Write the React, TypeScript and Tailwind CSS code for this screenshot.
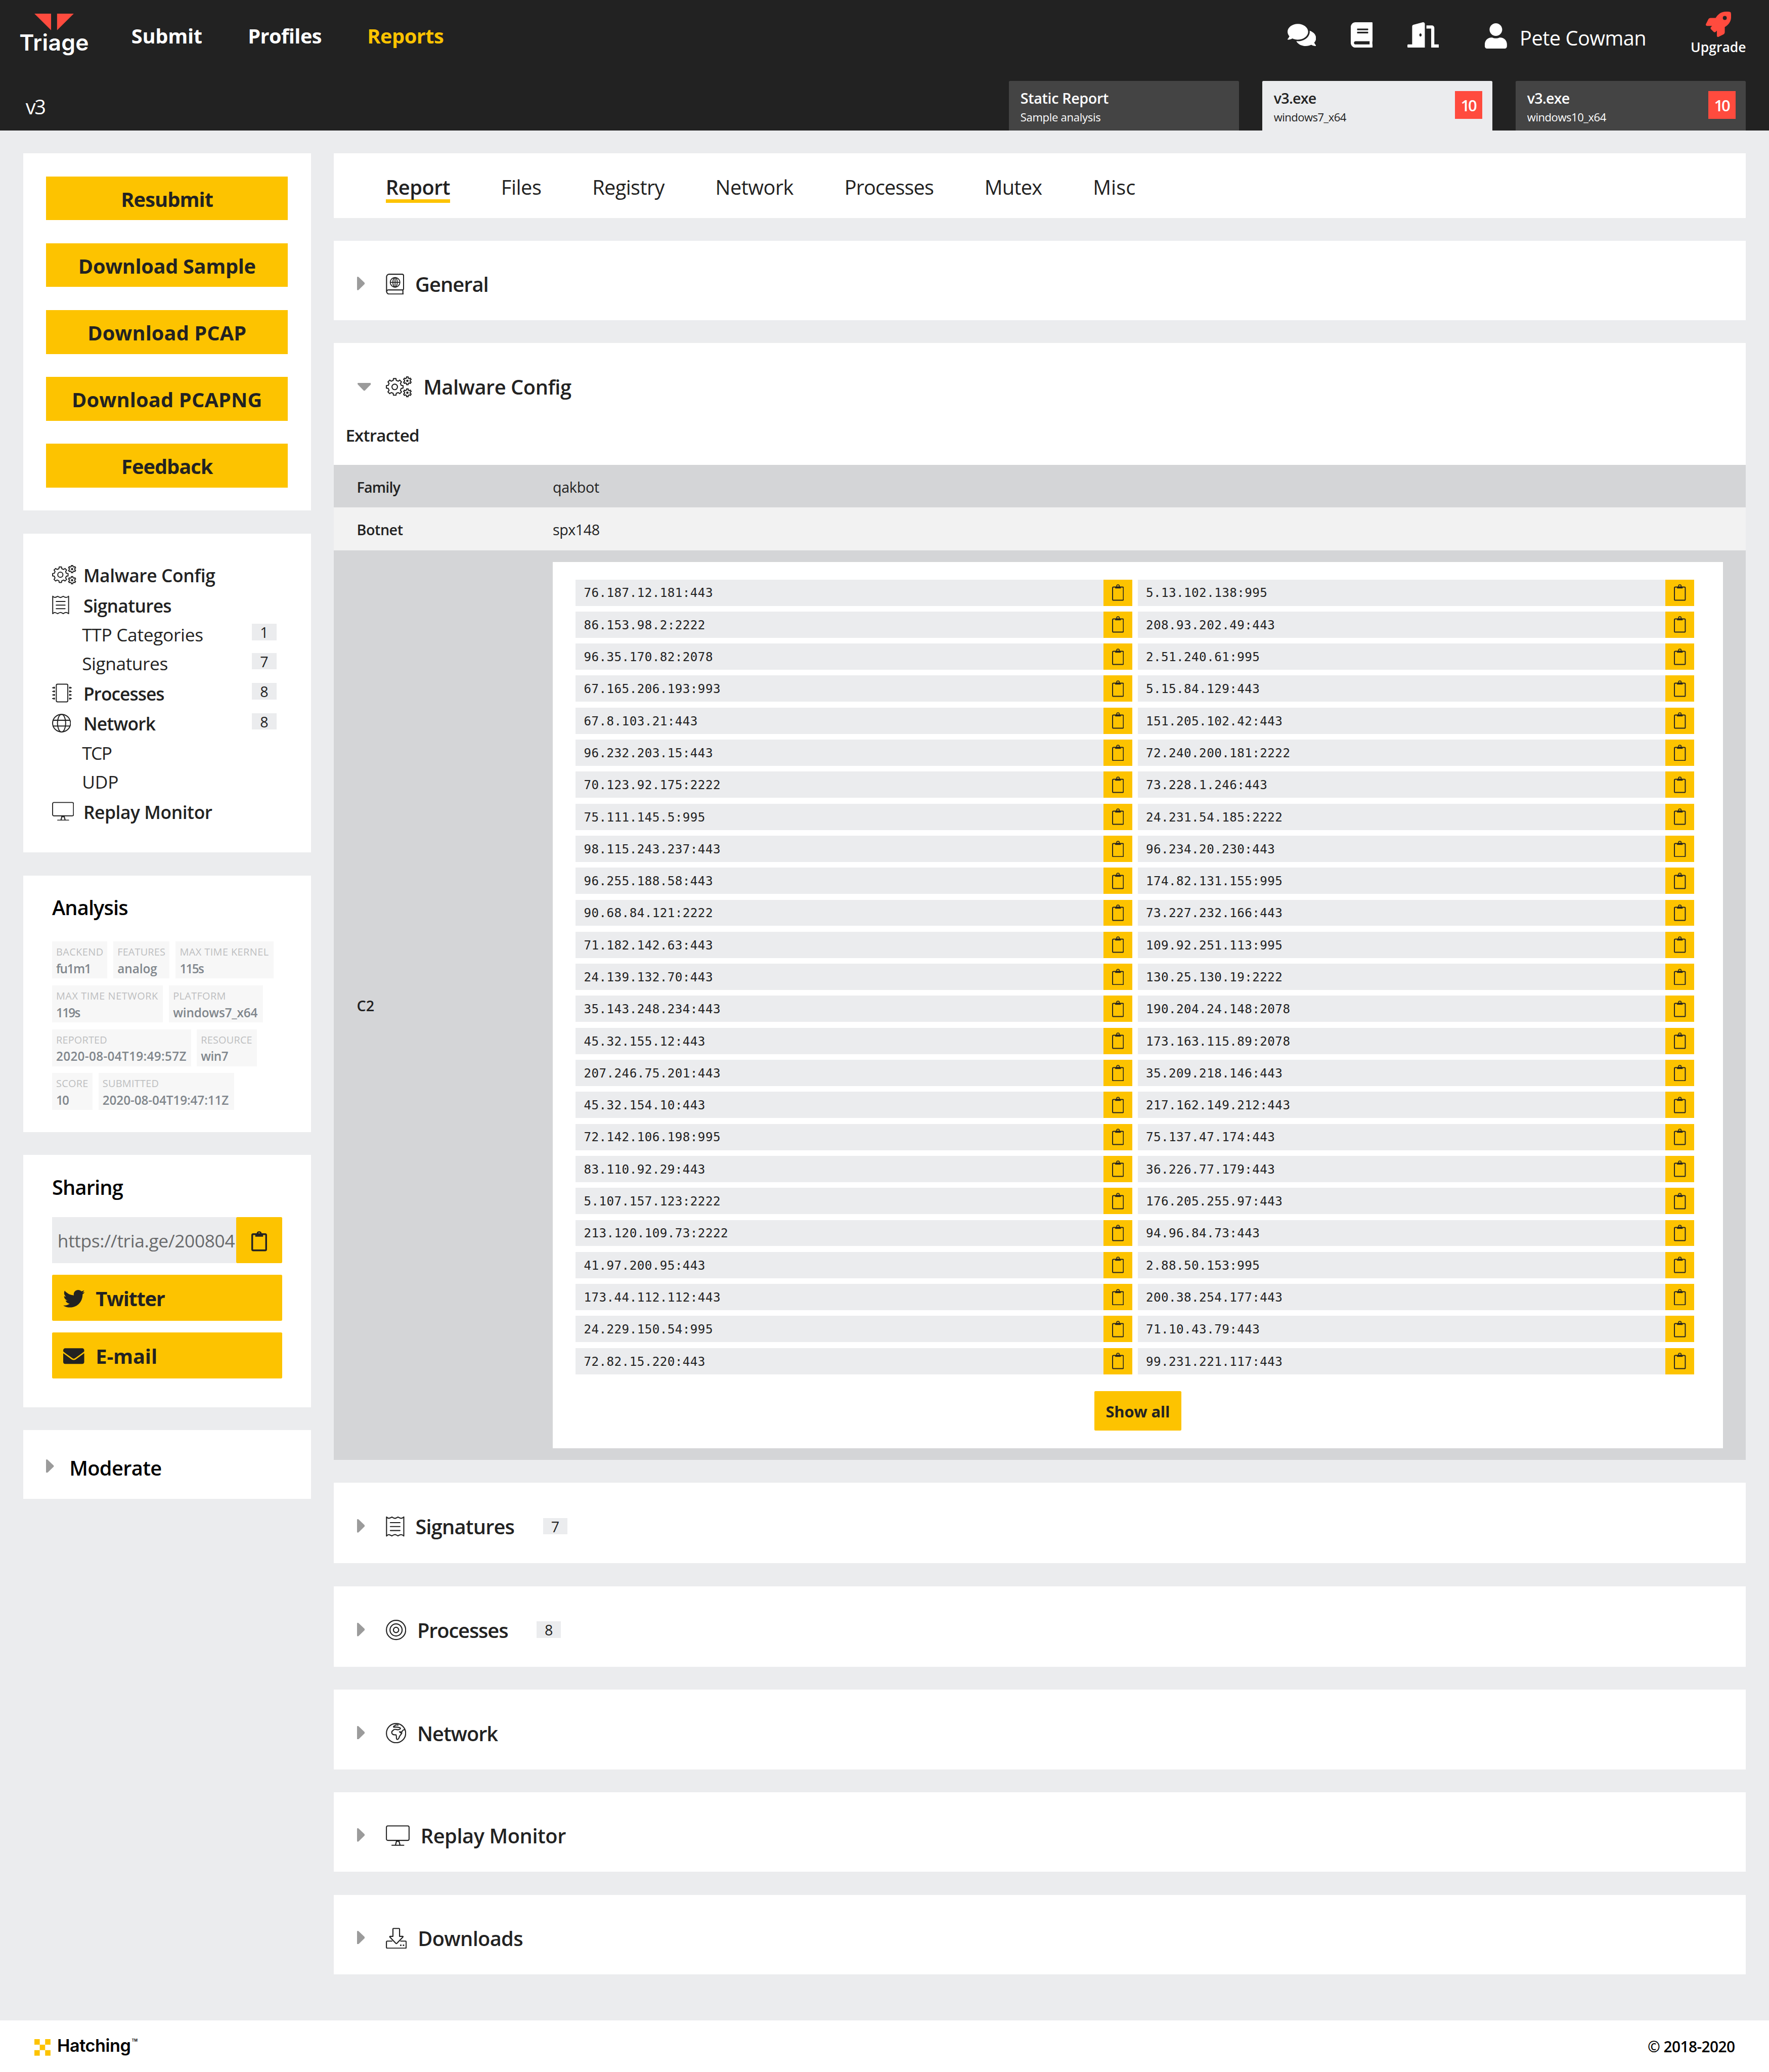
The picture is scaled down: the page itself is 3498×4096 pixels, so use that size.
import type { ReactNode } from "react";
import { FaBook, FaComments, FaDoorOpen, FaEnvelope, FaRocket, FaTwitter, FaUser } from "react-icons/fa";

/* ---------- icons ---------- */

function gearPath(cx: number, cy: number, outer: number, inner: number, teeth: number) {
  const step = (Math.PI * 2) / teeth;
  const pts: string[] = [];
  for (let i = 0; i < teeth; i++) {
    const a = -Math.PI / 2 + i * step;
    const corners: [number, number][] = [
      [-0.3, inner],
      [-0.19, outer],
      [0.19, outer],
      [0.3, inner],
    ];
    for (const [f, r] of corners) {
      pts.push(`${(cx + Math.cos(a + f * step) * r).toFixed(2)} ${(cy + Math.sin(a + f * step) * r).toFixed(2)}`);
    }
  }
  return `M${pts.join("L")}Z`;
}

const BIG_GEAR = gearPath(40, 46, 38, 30, 8);
const TOP_GEAR = gearPath(97, 18.5, 18, 13, 6);
const BOTTOM_GEAR = gearPath(97, 72.5, 18, 13, 6);

type IconProps = { className?: string };

function GearsIcon({ className }: IconProps) {
  return (
    <svg viewBox="0 0 118 91" className={className} fill="none" stroke="currentColor" strokeWidth="4.8" strokeLinejoin="round">
      <path d={BIG_GEAR} />
      <circle cx="40" cy="46" r="12.5" />
      <path d={TOP_GEAR} />
      <path d={BOTTOM_GEAR} />
      <circle cx="97" cy="18.5" r="3" fill="currentColor" />
      <circle cx="97" cy="72.5" r="3" fill="currentColor" />
    </svg>
  );
}

function ReceiptIcon({ className }: IconProps) {
  return (
    <svg viewBox="0 0 83 92" className={className} fill="none" stroke="currentColor" strokeWidth="4.8" strokeLinejoin="round" strokeLinecap="round">
      <path d="M3 3.5Q9 10 14 9.5Q20 8 27 4Q34 9 41 10Q48 8 54 4Q61 9 67 9.5Q73 10 80 3.5V88.500Q73 82 67 82.500Q61 83 54 88Q48 84 41 82Q34 83 27 88Q20 84 14 82.500Q9 82 3 88.500Z" />
      <path d="M20 29H63M20 46.500H63M20 64H63" />
    </svg>
  );
}

function ChipIcon({ className }: IconProps) {
  return (
    <svg viewBox="0 0 96 92" className={className} fill="none" stroke="currentColor" strokeWidth="4.8">
      <rect x="20.500" y="3" width="56" height="86" rx="6" />
      <path strokeWidth="8.500" d="M6 20.500H14M6 38H14M6 55.500H14M6 73H14M83 20.500H91M83 38H91M83 55.500H91M83 73H91" />
      <path strokeWidth="4" d="M0 20.500H8M0 38H8M0 55.500H8M0 73H8M88 20.500H96M88 38H96M88 55.500H96M88 73H96" />
    </svg>
  );
}

function GlobeIcon({ className }: IconProps) {
  return (
    <svg viewBox="0 0 92 90" className={className} fill="none" stroke="currentColor" strokeWidth="5">
      <ellipse cx="46" cy="45" rx="43.500" ry="42.500" />
      <ellipse cx="46" cy="45" rx="20" ry="42.500" />
      <path d="M4 31H88M4 59H88" />
    </svg>
  );
}

function MonitorIcon({ className }: IconProps) {
  return (
    <svg viewBox="0 0 106 92" className={className} fill="none" stroke="currentColor" strokeWidth="4.6" strokeLinejoin="round" strokeLinecap="round">
      <rect x="2.500" y="3" width="101" height="64.500" rx="6" />
      <path d="M27 89H80" />
      <path d="M48 69L43 88M58 69L63 88" strokeWidth="5" />
      <path d="M48 71H58" strokeWidth="6" />
    </svg>
  );
}

function PassportIcon({ className }: IconProps) {
  return (
    <svg viewBox="0 0 16 18.2" className={className} fill="none" stroke="currentColor" strokeWidth="0.95" strokeLinejoin="round">
      <path d="M15.400 17.700H2.900A2.300 2.300 0 0 1 .6 15.400V2.700A2.200 2.200 0 0 1 2.800.5H14.200A1.200 1.200 0 0 1 15.400 1.700V13A1.100 1.100 0 0 1 14.300 14.100H2.900A1.800 1.800 0 0 0 .6 15.700M14.800 14.200V17.600" />
      <g strokeWidth="0.8">
        <circle cx="8" cy="7.500" r="4.200" />
        <ellipse cx="8" cy="7.500" rx="1.900" ry="4.200" />
        <path d="M3.800 7.500H12.200M8 3.300V11.700" />
      </g>
    </svg>
  );
}

function TargetIcon({ className }: IconProps) {
  return (
    <svg viewBox="0 0 17.700 17.700" className={className} fill="none" stroke="currentColor" strokeWidth="0.95">
      <circle cx="8.850" cy="8.850" r="8.350" />
      <circle cx="8.850" cy="8.850" r="5.250" />
      <circle cx="8.850" cy="8.850" r="2.300" />
    </svg>
  );
}

function EarthIcon({ className }: IconProps) {
  return (
    <svg viewBox="0 0 17.700 17.700" className={className} fill="none" stroke="currentColor" strokeWidth="0.95" strokeLinejoin="round" strokeLinecap="round">
      <circle cx="8.850" cy="8.850" r="8.350" />
      <path d="M10.600 1.800Q8.200 1.400 8 2.300Q6.300 2.700 6.800 3.700Q9.400 3.300 12.300 4.200Q13.200 5.200 11.800 5.500Q10.800 6.200 9.200 5.700Q6.800 5.300 6.300 6.500Q4.800 7.300 5.200 8.800Q5.800 10.500 8.800 10.300Q9.300 11.500 9.200 13.300Q9.300 14.600 10.500 14.200Q11.700 13 11.800 11.700L13.800 9L11.800 7.700L14 7.800Q14.200 6.200 16.100 5.800" />
    </svg>
  );
}

function DownloadIcon({ className }: IconProps) {
  return (
    <svg viewBox="0 0 18.400 18.300" className={className} fill="none" stroke="currentColor" strokeWidth="0.95" strokeLinejoin="round" strokeLinecap="round">
      <path d="M6.700.5H11.500Q12 .5 12 1V7.400H14.800Q15.300 7.500 14.900 8L9.700 13.500Q9.200 14 8.700 13.500L3.500 8Q3.200 7.500 3.700 7.400H6.200V1Q6.200.5 6.700.5Z" />
      <path d="M5.300 11.600H1.300Q.5 11.600.5 12.400V17Q.5 17.800 1.300 17.800H17Q17.800 17.800 17.800 17V12.400Q17.800 11.600 17 11.600H13" />
      <path d="M13 15.200H13.150M15.400 15.200H15.550" strokeWidth="1.300" />
    </svg>
  );
}

function ClipboardIcon() {
  return (
    <svg viewBox="0 0 13.600 17.800" className="h-[1.1125rem] w-[0.85rem]" fill="none">
      <rect x="0.750" y="2.950" width="12.100" height="14.050" rx="0.900" stroke="currentColor" strokeWidth="1.500" />
      <path fillRule="evenodd" fill="currentColor" d="M3.400 2.200H4.600A2.250 2.250 0 0 1 9 2.200H10.200V5.200H3.400ZM6.800 1.500A.75.75 0 1 0 6.800 3A.75.75 0 1 0 6.800 1.500Z" />
    </svg>
  );
}

function ClipboardThinIcon() {
  return (
    <svg viewBox="0 0 10.300 14.400" className="h-[0.9rem] w-[0.64375rem]" fill="none" stroke="currentColor">
      <rect x="0.450" y="2.450" width="9.400" height="11.400" rx="0.700" strokeWidth="0.850" />
      <path d="M2.700 2.100H7.600V3.600H2.700Z" fill="currentColor" stroke="none" />
      <circle cx="5.150" cy="1.600" r="1.150" strokeWidth="0.700" />
    </svg>
  );
}

function CaretRight() {
  return (
    <svg viewBox="0 0 6.800 11.700" className="h-[0.73125rem] w-[0.425rem] shrink-0 text-[#9b9b9b]">
      <path fill="currentColor" d="M0 .5Q0 0 .6 0L1.300.2L6.600 5.300Q7 5.850 6.600 6.400L1.300 11.500L.6 11.700Q0 11.700 0 11.200Z" />
    </svg>
  );
}

function CaretDown() {
  return (
    <svg viewBox="0 0 11.700 6.800" className="h-[0.425rem] w-[0.73125rem] shrink-0 text-[#9b9b9b]">
      <path fill="currentColor" d="M.5 0Q0 0 0 .6L.2 1.300L5.300 6.600Q5.850 7 6.400 6.600L11.500 1.300L11.700.6Q11.700 0 11.200 0Z" />
    </svg>
  );
}

/* ---------- header ---------- */

function Header() {
  return (
    <header className="flex h-[7.075rem] flex-col bg-[#222222] text-white">
      <div className="flex h-[4.4rem] items-start">
        <div className="ml-[1.06rem] flex w-15 flex-col items-center pt-3">
          <svg viewBox="0 0 34.200 14.400" className="h-[0.9rem] w-[2.1375rem] text-[#ff4b3e]">
            <path fill="currentColor" d="M0 0H14.500V14.400ZM34.200 0H19.700V14.400Z" />
          </svg>
          <span className="mt-[0.04rem] font-[Inter] text-[1.219rem] leading-none font-semibold tracking-[0.006em]">Triage</span>
        </div>
        <nav className="ml-[2.32rem] flex h-[3.93rem] items-center gap-[2.48rem] text-[1.091rem] font-bold">
          <a className="tracking-[-0.0065em]">Submit</a>
          <a className="tracking-[-0.015em]">Profiles</a>
          <a className="tracking-[-0.013em] text-[#fdc300]">Reports</a>
        </nav>
        <div className="ml-auto flex items-start pr-5">
          <div className="flex h-[3.78rem] items-center gap-7.5">
            <FaComments className="h-5.5 w-[1.547rem]" />
            <FaBook className="h-5.5 w-[1.203rem]" />
            <FaDoorOpen className="h-5.5 w-[1.719rem]" />
          </div>
          <div className="ml-[2.48rem] flex h-[4.14rem] items-center">
            <FaUser className="-mt-[0.22rem] h-5.5 w-[1.203rem]" />
            <span className="ml-[0.7rem] w-[6.78rem] text-[1.091rem] tracking-[-0.0135em] whitespace-nowrap">Pete Cowman</span>
          </div>
          <div className="ml-10 flex w-12 flex-col items-center pt-[0.64rem]">
            <FaRocket className="h-5.5 w-5.5 text-[#ff4b3e]" />
            <span className="mt-[0.17rem] text-[0.7275rem] leading-none font-semibold">Upgrade</span>
          </div>
        </div>
      </div>
      <div className="flex h-[2.675rem] items-stretch justify-between pr-5">
        <div className="flex items-center pt-[0.14rem] pl-[1.39rem] text-[1.091rem] tracking-[-0.057em]">v3</div>
        <div className="flex gap-5">
          <HeaderTab title="Static Report" titleClass="tracking-[-0.012em]" sub="Sample analysis" subClass="tracking-[-0.014em]" />
          <HeaderTab active title="v3.exe" titleClass="tracking-[-0.027em]" sub="windows7_x64" subClass="tracking-[-0.025em]" score="10" />
          <HeaderTab title="v3.exe" titleClass="tracking-[-0.027em]" sub="windows10_x64" subClass="tracking-[-0.0216em]" score="10" />
        </div>
      </div>
    </header>
  );
}

function HeaderTab(props: { title: string; titleClass: string; sub: string; subClass: string; score?: string; active?: boolean }) {
  return (
    <div
      className={`flex w-50 justify-between rounded-t-[0.0625rem] pr-[0.55rem] pl-2.5 ${
        props.active ? "bg-[#ebecee] text-[#222222]" : "bg-[#444444] text-white"
      }`}
    >
      <div className="flex flex-col pt-[0.55rem]">
        <span className={`text-[0.788rem] leading-none font-semibold ${props.titleClass}`}>{props.title}</span>
        <span className={`mt-[0.31rem] text-[0.606rem] leading-none ${props.subClass}`}>{props.sub}</span>
      </div>
      {props.score && (
        <span className="mt-[0.55rem] flex size-6 items-center justify-center bg-[#ff4b3e] pr-[0.06rem] pt-[0.04rem] text-[0.849rem] leading-none font-semibold tracking-[-0.1em] text-white">
          {props.score}
        </span>
      )}
    </div>
  );
}

/* ---------- sidebar ---------- */

const ACTIONS = [
  { label: "Resubmit", track: "tracking-[-0.023em]" },
  { label: "Download Sample", track: "tracking-[-0.009em]" },
  { label: "Download PCAP", track: "tracking-[0.002em]" },
  { label: "Download PCAPNG", track: "tracking-[0.004em]" },
  { label: "Feedback", track: "tracking-[-0.025em]" },
];

function CountBadge({ children }: { children: ReactNode }) {
  return (
    <span className="flex h-[0.89rem] w-[1.32rem] items-center justify-center bg-[#ebecee] pt-[0.06rem] text-[0.788rem] leading-none font-normal tracking-normal">
      {children}
    </span>
  );
}

function NavMain({ icon, label, track, count }: { icon: ReactNode; label: string; track: string; count?: string }) {
  return (
    <li className="flex h-[1.6375rem] items-center">
      <span className="-mt-[0.05rem] w-[1.705rem]">{icon}</span>
      <span className={`pt-[0.05rem] font-semibold ${track}`}>{label}</span>
      {count && (
        <span className="-mt-[0.22rem] ml-auto">
          <CountBadge>{count}</CountBadge>
        </span>
      )}
    </li>
  );
}

function NavSub({ label, track, count }: { label: string; track: string; count?: string }) {
  return (
    <li className="flex h-[1.572rem] items-center pl-[1.63rem]">
      <span className={track}>{label}</span>
      {count && (
        <span className="-mt-[0.29rem] ml-auto">
          <CountBadge>{count}</CountBadge>
        </span>
      )}
    </li>
  );
}

function Chip({ width, label, labelTrack, value, valueTrack }: { width: string; label: string; labelTrack: string; value: string; valueTrack: string }) {
  return (
    <div className={`flex h-8 flex-col bg-[#f7f7f7] pt-[0.3rem] pl-[0.22rem] whitespace-nowrap ${width}`}>
      <span className={`text-[0.5456rem] leading-none text-[#bdbec0] ${labelTrack}`}>{label}</span>
      <span className={`mt-[0.3rem] text-[0.667rem] leading-none font-semibold text-[#80868c] ${valueTrack}`}>{value}</span>
    </div>
  );
}

function Sidebar() {
  return (
    <aside className="flex w-62.5 shrink-0 flex-col gap-5">
      <section className="flex flex-col gap-5 bg-white p-5">
        {ACTIONS.map((a) => (
          <button key={a.label} className={`flex h-9.5 items-center justify-center bg-[#fdc300] pt-[0.13rem] text-[1.091rem] font-bold text-[#222222] ${a.track}`}>
            {a.label}
          </button>
        ))}
      </section>

      <section className="h-[17.3rem] bg-white pt-[1.43rem] pr-7.5 pl-[1.57rem]">
        <ul className="text-[0.97rem] leading-none whitespace-nowrap text-[#222222]">
          <NavMain icon={<GearsIcon className="h-[1.04rem] w-[1.32rem]" />} label="Malware Config" track="tracking-[-0.010em]" />
          <NavMain icon={<ReceiptIcon className="h-[1.04rem] w-[0.93rem]" />} label="Signatures" track="tracking-[-0.020em]" />
          <NavSub label="TTP Categories" track="tracking-[-0.0093em]" count="1" />
          <NavSub label="Signatures" track="tracking-[-0.0127em]" count="7" />
          <NavMain icon={<ChipIcon className="h-[1.04rem] w-[1.07rem]" />} label="Processes" track="tracking-[-0.0275em]" count="8" />
          <NavMain icon={<GlobeIcon className="h-[1.02rem] w-[1.03rem]" />} label="Network" track="tracking-[-0.0226em]" count="8" />
          <NavSub label="TCP" track="tracking-[-0.044em]" />
          <NavSub label="UDP" track="tracking-[-0.004em]" />
          <NavMain icon={<MonitorIcon className="h-[1.04rem] w-[1.19rem]" />} label="Replay Monitor" track="tracking-[-0.0116em]" />
        </ul>
      </section>

      <section className="h-[13.92rem] bg-white px-[1.575rem] pt-[1.21rem]">
        <h2 className="text-[1.091rem] leading-none font-semibold tracking-[-0.022em] text-black">Analysis</h2>
        <div className="mt-[1.285rem] flex flex-col gap-[0.379rem]">
          <div className="flex gap-[0.33rem]">
            <Chip width="w-12" label="BACKEND" labelTrack="tracking-[0.022em]" value="fu1m1" valueTrack="tracking-[-0.0556em]" />
            <Chip width="w-[3.05rem]" label="FEATURES" labelTrack="tracking-[0.0075em]" value="analog" valueTrack="tracking-[-0.0014em]" />
            <Chip width="w-[5.3rem]" label="MAX TIME KERNEL" labelTrack="tracking-[0.022em]" value="115s" valueTrack="tracking-[-0.07em]" />
          </div>
          <div className="flex gap-[0.32rem]">
            <Chip width="w-[6.025rem]" label="MAX TIME NETWORK" labelTrack="tracking-[0.028em]" value="119s" valueTrack="tracking-[-0.07em]" />
            <Chip width="w-[5.1rem]" label="PLATFORM" labelTrack="tracking-[0.019em]" value="windows7_x64" valueTrack="tracking-[-0.0065em]" />
          </div>
          <div className="flex gap-[0.31rem]">
            <Chip width="w-[7.55rem]" label="REPORTED" labelTrack="tracking-[0.010em]" value="2020-08-04T19:49:57Z" valueTrack="tracking-[0.0136em]" />
            <Chip width="w-[3.256rem]" label="RESOURCE" labelTrack="tracking-[0.0096em]" value="win7" valueTrack="tracking-[-0.022em]" />
          </div>
          <div className="flex gap-[0.32rem]">
            <Chip width="w-[2.2rem]" label="SCORE" labelTrack="tracking-[0.016em]" value="10" valueTrack="tracking-[-0.075em]" />
            <Chip width="w-[7.356rem]" label="SUBMITTED" labelTrack="tracking-[0.0137em]" value="2020-08-04T19:47:11Z" valueTrack="tracking-[-0.0034em]" />
          </div>
        </div>
      </section>

      <section className="h-[13.68rem] bg-white px-[1.575rem] pt-[1.21rem] text-[#222222]">
        <h2 className="text-[1.091rem] leading-none font-semibold tracking-[-0.0205em] text-black">Sharing</h2>
        <div className="mt-[1.066rem] flex w-50 flex-col gap-[0.63rem]">
          <div className="flex h-10">
            <div className="flex w-40 items-center overflow-hidden bg-[#ebecee] pt-[0.07rem] pl-[0.3rem] text-[0.97rem] tracking-[-0.0104em] whitespace-nowrap text-[#696a6c]">
              https://tria.ge/200804
            </div>
            <button className="flex w-10 items-center justify-center rounded-[0.0625rem] bg-[#fdc300] pt-[0.11rem]">
              <ClipboardIcon />
            </button>
          </div>
          <button className="flex h-[2.4925rem] items-center rounded-[0.0625rem] bg-[#fdc300] pl-[0.6rem] text-[1.091rem] font-bold tracking-[-0.0324em]">
            <FaTwitter className="mt-[0.09rem] size-[1.17rem]" />
            <span className="ml-[0.6rem] pt-[0.13rem]">Twitter</span>
          </button>
          <button className="flex h-[2.4925rem] items-center rounded-[0.0625rem] bg-[#fdc300] pl-[0.61rem] text-[1.091rem] font-bold tracking-[-0.003em]">
            <FaEnvelope className="mt-[0.09rem] size-[1.14rem]" />
            <span className="ml-[0.62rem] pt-[0.15rem]">E-mail</span>
          </button>
        </div>
      </section>

      <section className="flex h-[3.71rem] items-center bg-white pl-5">
        <span className="flex pt-[0.17rem]">
          <CaretRight />
        </span>
        <h2 className="ml-[0.84rem] pt-[0.44rem] text-[1.091rem] font-semibold tracking-[-0.0155em] text-black">Moderate</h2>
      </section>
    </aside>
  );
}

/* ---------- main column ---------- */

const PAGES = [
  { label: "Report", track: "tracking-[-0.012em]", active: true },
  { label: "Files", track: "tracking-[-0.0115em]" },
  { label: "Registry", track: "tracking-[-0.016em]" },
  { label: "Network", track: "tracking-[-0.014em]" },
  { label: "Processes", track: "tracking-[-0.0233em]" },
  { label: "Mutex", track: "tracking-[-0.0183em]" },
  { label: "Misc", track: "tracking-[0.0034em]" },
];

const HOSTS = [
  "76.187.12.181:443", "5.13.102.138:995",
  "86.153.98.2:2222", "208.93.202.49:443",
  "96.35.170.82:2078", "2.51.240.61:995",
  "67.165.206.193:993", "5.15.84.129:443",
  "67.8.103.21:443", "151.205.102.42:443",
  "96.232.203.15:443", "72.240.200.181:2222",
  "70.123.92.175:2222", "73.228.1.246:443",
  "75.111.145.5:995", "24.231.54.185:2222",
  "98.115.243.237:443", "96.234.20.230:443",
  "96.255.188.58:443", "174.82.131.155:995",
  "90.68.84.121:2222", "73.227.232.166:443",
  "71.182.142.63:443", "109.92.251.113:995",
  "24.139.132.70:443", "130.25.130.19:2222",
  "35.143.248.234:443", "190.204.24.148:2078",
  "45.32.155.12:443", "173.163.115.89:2078",
  "207.246.75.201:443", "35.209.218.146:443",
  "45.32.154.10:443", "217.162.149.212:443",
  "72.142.106.198:995", "75.137.47.174:443",
  "83.110.92.29:443", "36.226.77.179:443",
  "5.107.157.123:2222", "176.205.255.97:443",
  "213.120.109.73:2222", "94.96.84.73:443",
  "41.97.200.95:443", "2.88.50.153:995",
  "173.44.112.112:443", "200.38.254.177:443",
  "24.229.150.54:995", "71.10.43.79:443",
  "72.82.15.220:443", "99.231.221.117:443",
];

function SectionCard({ height, icon, title, track, count }: { height: string; icon: ReactNode; title: string; track: string; count?: string }) {
  return (
    <section className={`flex items-center bg-white pt-[0.39rem] pl-[1.24rem] text-[#222222] ${height}`}>
      <span className="flex pb-[0.07rem]">
        <CaretRight />
      </span>
      <span className="ml-[1.145rem]">{icon}</span>
      <h2 className={`ml-[0.6rem] pt-[0.07rem] text-[1.091rem] font-semibold ${track}`}>{title}</h2>
      {count && (
        <span className="ml-[1.56rem] pb-[0.06rem]">
          <CountBadge>{count}</CountBadge>
        </span>
      )}
    </section>
  );
}

function HostRow({ host }: { host: string }) {
  return (
    <div className="mr-[0.3125rem] flex h-[1.425rem] bg-[#ebecee]">
      <span className="flex flex-1 items-center pt-[0.06rem] pl-[0.44rem] font-['DejaVu_Sans_Mono',monospace] text-[0.666rem] tracking-[0.0175em]">{host}</span>
      <button className="flex w-[1.5625rem] items-center justify-center bg-[#fdc300] pl-[0.02rem]">
        <ClipboardThinIcon />
      </button>
    </div>
  );
}

function MalwareConfig() {
  return (
    <section className="bg-white text-[#222222]">
      <div className="flex h-[4.375rem] items-center pt-[0.39rem] pl-[1.27rem]">
        <CaretDown />
        <GearsIcon className="ml-[0.81rem] h-[1.13rem] w-[1.42rem]" />
        <h2 className="ml-[0.62rem] pt-[0.07rem] text-[1.091rem] font-semibold tracking-[-0.0115em]">Malware Config</h2>
      </div>
      <h3 className="pt-[0.17rem] pl-[0.63rem] text-[0.909rem] leading-none font-semibold tracking-[-0.024em]">Extracted</h3>
      <div className="mt-[1.145rem] text-[0.788rem]">
        <div className="grid h-[2.325rem] grid-cols-[11.87rem_1fr] items-center bg-[#d4d5d7] pt-[0.06rem]">
          <span className="pl-[1.24rem] font-semibold tracking-[-0.0297em]">Family</span>
          <span className="tracking-[-0.0098em]">qakbot</span>
        </div>
        <div className="grid h-[2.325rem] grid-cols-[11.87rem_1fr] items-center bg-[#f2f2f2] pt-[0.06rem]">
          <span className="pl-[1.24rem] font-semibold tracking-[-0.0175em]">Botnet</span>
          <span className="tracking-[-0.0153em]">spx148</span>
        </div>
        <div className="grid grid-cols-[11.87rem_1fr] items-center bg-[#d4d5d7] py-[0.63rem] pr-5">
          <span className="pt-[0.04rem] pl-[1.24rem] font-semibold">C2</span>
          <div className="flex h-[48.075rem] flex-col items-center bg-white px-5 pt-[0.95rem]">
            <div className="grid w-full grid-cols-2 gap-y-[0.3125rem]">
              {HOSTS.map((h) => (
                <HostRow key={h} host={h} />
              ))}
            </div>
            <button className="mt-[0.925rem] flex h-8.5 w-[4.71rem] items-center justify-center rounded-[0.0625rem] bg-[#fdc300] pt-[0.06rem] text-[0.849rem] font-bold tracking-[-0.0072em]">
              Show all
            </button>
          </div>
        </div>
      </div>
    </section>
  );
}

function MainColumn() {
  return (
    <main className="flex flex-1 flex-col gap-5">
      <nav className="flex h-14 items-start gap-[2.765rem] bg-white pl-[2.81rem] text-[#222222]">
        {PAGES.map((p) => (
          <a
            key={p.label}
            className={`h-[2.675rem] border-b-[0.2rem] pt-[1.19rem] text-[1.091rem] leading-[1.31rem] ${p.track} ${
              p.active ? "border-[#fdc300] font-semibold" : "border-transparent"
            }`}
          >
            {p.label}
          </a>
        ))}
      </nav>
      <SectionCard height="h-[4.2875rem]" icon={<PassportIcon className="h-[1.14rem] w-[1rem]" />} title="General" track="tracking-[-0.024em]" />
      <MalwareConfig />
      <SectionCard height="h-[4.37rem]" icon={<ReceiptIcon className="h-[1.13rem] w-[1.01rem]" />} title="Signatures" track="tracking-[-0.020em]" count="7" />
      <SectionCard height="h-[4.36rem]" icon={<TargetIcon className="size-[1.106rem]" />} title="Processes" track="tracking-[-0.028em]" count="8" />
      <SectionCard height="h-[4.32rem]" icon={<EarthIcon className="size-[1.106rem]" />} title="Network" track="tracking-[-0.026em]" />
      <SectionCard height="h-[4.3rem]" icon={<MonitorIcon className="h-[1.13rem] w-[1.29rem]" />} title="Replay Monitor" track="tracking-[-0.0105em]" />
      <SectionCard height="h-[4.325rem]" icon={<DownloadIcon className="h-[1.14rem] w-[1.14rem]" />} title="Downloads" track="tracking-[-0.0163em]" />
    </main>
  );
}

/* ---------- footer ---------- */

function Footer() {
  return (
    <footer className="flex h-[2.8rem] items-start justify-between bg-white pr-[1.85rem] pl-7.5 text-black">
      <div className="flex items-start">
        <svg viewBox="0 0 3 3" preserveAspectRatio="none" className="mt-4 h-[0.9rem] w-[0.875rem] text-[#fdc300]">
          <path fill="currentColor" d="M0 0H1V1H0ZM2 0H3V1H2ZM1 1H2V2H1ZM0 2H1V3H0ZM2 2H3V3H2Z" />
        </svg>
        <span className="mt-[0.88rem] ml-[0.35rem] font-[Inter] text-[0.9375rem] leading-none font-semibold tracking-[-0.0116em]">Hatching</span>
        <span className="mt-[0.97rem] ml-[0.05rem] font-[Inter] text-[0.2rem] leading-none font-semibold">TM</span>
      </div>
      <span className="mt-[0.99rem] text-[0.819rem] leading-none font-semibold tracking-[-0.018em]">© 2018-2020</span>
    </footer>
  );
}

export default function App() {
  return (
    <div className="min-h-[112.4rem] bg-[#ebecee] font-['Open_Sans',sans-serif]">
      <style>{`:root { font-size: 36.4375px; }`}</style>
      <Header />
      <div className="flex h-[102.55rem] items-start gap-5 px-5 pt-5">
        <Sidebar />
        <MainColumn />
      </div>
      <Footer />
    </div>
  );
}
